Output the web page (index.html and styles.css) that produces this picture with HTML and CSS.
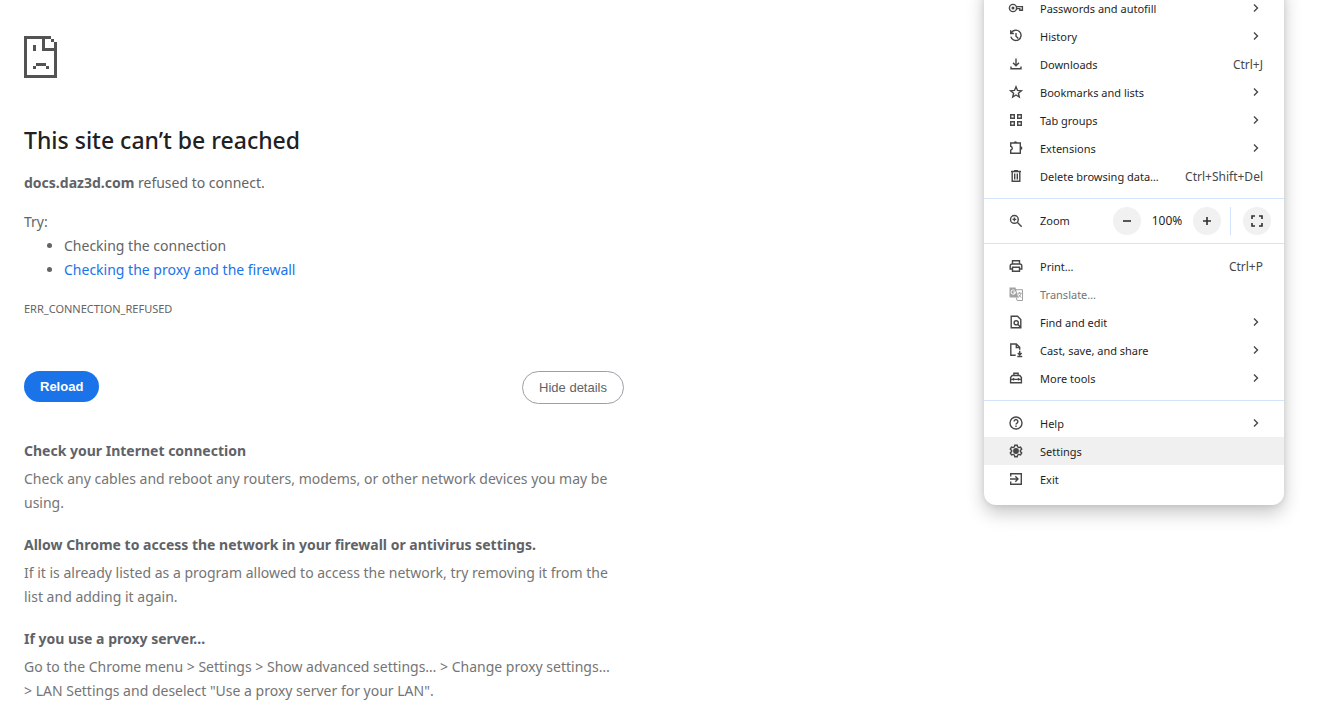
FILE: index.html
```
<!DOCTYPE html>
<html lang="en">
<head>
  <meta charset="UTF-8" />
  <meta name="viewport" content="width=device-width, initial-scale=1.0" />
  <title>docs.daz3d.com</title>
  <link rel="stylesheet" href="styles.css">
</head>
<body>
  <main class="error-page">
    <svg class="sad-page" viewBox="0 0 33 42" shape-rendering="crispEdges" aria-hidden="true">
      <path d="M0 0h27v3H3v36h27V15H18V3h3v9h9V6h3v36H0zM27 3h3v3h-3zM9 9h3v6H9zM12 27h10v3H12zM9 30h3v3H9zM22 30h3v3h-3z" />
    </svg>

    <h1 class="title">This site can’t be reached</h1>
    <p class="summary"><strong>docs.daz3d.com</strong> refused to connect.</p>

    <div class="suggestions">
      <p>Try:</p>
      <ul>
        <li>Checking the connection</li>
        <li><a href="#proxy">Checking the proxy and the firewall</a></li>
      </ul>
    </div>

    <div class="error-code">ERR_CONNECTION_REFUSED</div>

    <div class="buttons">
      <button class="btn btn-reload">Reload</button>
      <button class="btn btn-details">Hide details</button>
    </div>

    <section class="detail">
      <h2>Check your Internet connection</h2>
      <p>Check any cables and reboot any routers, modems, or other network devices you may be using.</p>
    </section>
    <section class="detail">
      <h2>Allow Chrome to access the network in your firewall or antivirus settings.</h2>
      <p>If it is already listed as a program allowed to access the network, try removing it from the list and adding it again.</p>
    </section>
    <section class="detail" id="proxy">
      <h2>If you use a proxy server…</h2>
      <p>Go to the Chrome menu &gt; Settings &gt; Show advanced settings… &gt; Change proxy settings… &gt;&nbsp;LAN Settings and deselect "Use a proxy server for your LAN".</p>
    </section>
  </main>

  <nav class="menu" aria-label="Browser menu">
    <div class="group">
      <button class="item">
        <svg class="icon" viewBox="0 0 16 16"><circle cx="5" cy="8" r="3.6" /><circle class="solid" cx="5" cy="8" r="1.5" /><path d="M8.4 6.6h6v3.6h-2.6V8.6H8.6" /></svg>
        <span class="label">Passwords and autofill</span>
        <svg class="chevron" viewBox="0 0 16 16"><path d="M7 4.5 10.5 8 7 11.5" /></svg>
      </button>
      <button class="item">
        <svg class="icon" viewBox="0 0 16 16"><path d="M3.2 5A5.2 5.2 0 1 1 2.8 8.6M2.7 2.3v3.2h3.2M8 5v3.2l2.3 2.3" /></svg>
        <span class="label">History</span>
        <svg class="chevron" viewBox="0 0 16 16"><path d="M7 4.5 10.5 8 7 11.5" /></svg>
      </button>
      <button class="item">
        <svg class="icon" viewBox="0 0 16 16"><path d="M8 2.5v7M5 6.8l3 3 3-3M3 10.5v2.2h10v-2.2" /></svg>
        <span class="label">Downloads</span>
        <span class="shortcut">Ctrl+J</span>
      </button>
      <button class="item">
        <svg class="icon" viewBox="0 0 16 16"><path d="m8 2.8 1.5 3.6 3.9.3-3 2.5.9 3.8L8 11l-3.3 2 .9-3.8-3-2.5 3.9-.3z" /></svg>
        <span class="label">Bookmarks and lists</span>
        <svg class="chevron" viewBox="0 0 16 16"><path d="M7 4.5 10.5 8 7 11.5" /></svg>
      </button>
      <button class="item">
        <svg class="icon" viewBox="0 0 16 16"><path d="M2.7 2.7h3.6v3.6H2.7zM9.7 2.7h3.6v3.6H9.7zM2.7 9.7h3.6v3.6H2.7zM9.7 9.7h3.6v3.6H9.7z" /></svg>
        <span class="label">Tab groups</span>
        <svg class="chevron" viewBox="0 0 16 16"><path d="M7 4.5 10.5 8 7 11.5" /></svg>
      </button>
      <button class="item">
        <svg class="icon" viewBox="0 0 16 16"><path d="M2.7 3h9.6v10.3H2.7v-3.2a2 2 0 0 0 0-3.9z" /><path class="solid" d="M5.6 3a1.8 1.8 0 0 1 3.6 0zM12.5 6.2a1.9 1.9 0 0 1 0 3.8z" /></svg>
        <span class="label">Extensions</span>
        <svg class="chevron" viewBox="0 0 16 16"><path d="M7 4.5 10.5 8 7 11.5" /></svg>
      </button>
      <button class="item">
        <svg class="icon" viewBox="0 0 16 16"><path d="M3 3.5h10M6 2.6h4M4.2 3.5v9.8h7.6V3.5M6.7 5.5v6M9.3 5.5v6" /></svg>
        <span class="label">Delete browsing data…</span>
        <span class="shortcut">Ctrl+Shift+Del</span>
      </button>
    </div>

    <div class="group zoom">
      <svg class="icon" viewBox="0 0 16 16"><circle cx="6.4" cy="6.4" r="3.9" /><path d="m9.3 9.3 4.4 4.4M4.5 6.4h3.8M6.4 4.5v3.8" /></svg>
      <span class="label">Zoom</span>
      <button class="round" aria-label="Zoom out"><svg viewBox="0 0 16 16"><path d="M4 8h8" /></svg></button>
      <span class="percent">100%</span>
      <button class="round" aria-label="Zoom in"><svg viewBox="0 0 16 16"><path d="M4 8h8M8 4v8" /></svg></button>
      <span class="divider"></span>
      <button class="round" aria-label="Full screen"><svg viewBox="0 0 16 16"><path d="M3 6V3h3M10 3h3v3M13 10v3h-3M6 13H3v-3" /></svg></button>
    </div>

    <div class="group">
      <button class="item">
        <svg class="icon" viewBox="0 0 16 16"><path d="M4.5 5.8V2.7h7v3.1M4.5 11H2.2V8a2 2 0 0 1 2-2h7.6a2 2 0 0 1 2 2v3h-2.3M4.5 9.3h7v4h-7z" /></svg>
        <span class="label">Print…</span>
        <span class="shortcut">Ctrl+P</span>
      </button>
      <button class="item" disabled>
        <svg class="icon" viewBox="0 0 16 16"><path class="solid" fill-rule="evenodd" d="M1.5 1.5h6l2.8 10H2.5a1 1 0 0 1-1-1zM7.8 5.6H5.2v1h1.4a1.6 1.6 0 1 1-.4-1.8l.7-.7a2.6 2.6 0 1 0 .9 1.5z" /><path class="thin" d="M8 3.7h6.5v10.8H9.2l-.9-3M9.6 7.2h4M11.6 6v1.2M13 7.4c-.4 1.7-1.4 3-2.9 4M10.6 8.6l2.6 3" /></svg>
        <span class="label">Translate…</span>
      </button>
      <button class="item">
        <svg class="icon" viewBox="0 0 16 16"><path d="M3.2 2.2h6.3l3.3 3.3v8.3H3.2zM10 10.5l2.7 3" /><circle cx="8.2" cy="8.8" r="2.1" /></svg>
        <span class="label">Find and edit</span>
        <svg class="chevron" viewBox="0 0 16 16"><path d="M7 4.5 10.5 8 7 11.5" /></svg>
      </button>
      <button class="item">
        <svg class="icon" viewBox="0 0 16 16"><path d="M7.7 13.2H2.8V2h5.5l3.4 3.4v2.4M8.3 2v3.6h3.4M11.7 8.8v4M9.8 11l1.9 1.9 1.9-1.9M9.3 14.5h4.9" /></svg>
        <span class="label">Cast, save, and share</span>
        <svg class="chevron" viewBox="0 0 16 16"><path d="M7 4.5 10.5 8 7 11.5" /></svg>
      </button>
      <button class="item">
        <svg class="icon" viewBox="0 0 16 16"><path d="M2.6 12.7V7.5l1.6-2h7.6l1.6 2v5.2zM5.9 5.4V3.3h4.2v2.1M2.6 9.4h10.8M5.5 8v2.5M10.5 8v2.5" /></svg>
        <span class="label">More tools</span>
        <svg class="chevron" viewBox="0 0 16 16"><path d="M7 4.5 10.5 8 7 11.5" /></svg>
      </button>
    </div>

    <div class="group">
      <button class="item">
        <svg class="icon" viewBox="0 0 16 16"><circle cx="8" cy="8" r="6" /><path d="M6.1 6.5a1.9 1.9 0 1 1 2.9 1.6c-.7.4-1 .7-1 1.5M8 10.6v1.3" /></svg>
        <span class="label">Help</span>
        <svg class="chevron" viewBox="0 0 16 16"><path d="M7 4.5 10.5 8 7 11.5" /></svg>
      </button>
      <button class="item active">
        <svg class="icon" viewBox="0 0 16 16"><path d="M6.8 2.2h2.4l.4 1.7 1.2.7 1.7-.5 1.2 2.1L12.4 7.4v1.2l1.3 1.2-1.2 2.1-1.7-.5-1.2.7-.4 1.7H6.8l-.4-1.7-1.2-.7-1.7.5-1.2-2.1 1.3-1.2V7.4L2.3 6.2l1.2-2.1 1.7.5 1.2-.7z" /><circle class="solid" cx="8" cy="8" r="2.9" /></svg>
        <span class="label">Settings</span>
      </button>
      <button class="item">
        <svg class="icon" viewBox="0 0 16 16"><path d="M2.7 5.5V2.7h10.6v10.6H2.7v-2.8M2 8h7.6M7.3 5.3 10 8l-2.7 2.7" /></svg>
        <span class="label">Exit</span>
      </button>
    </div>
  </nav>
</body>
</html>
```
FILE: styles.css
```
* {
  box-sizing: border-box;
}

body {
  margin: 0;
  background: #fff;
  color: #646464;
  font-family: 'Segoe UI', 'Noto Sans', sans-serif;
  font-size: 14px;
  line-height: 24px;
}

h1, h2, p, ul {
  margin: 0;
}

button {
  font-family: inherit;
  cursor: pointer;
}

.error-page {
  max-width: 648px;
  padding: 36px 24px 0;
}

.sad-page {
  display: block;
  width: 33px;
  height: 42px;
  fill: #535353;
}

.title {
  margin-top: 47px;
  color: #202124;
  font-size: 23px;
  font-weight: 500;
  line-height: 30px;
}

.summary {
  margin-top: 16px;
}

.summary strong {
  color: #5f6368;
}

.suggestions {
  margin-top: 15px;
}

.suggestions ul {
  padding-left: 40px;
}

.suggestions a {
  color: #1a73e8;
  text-decoration: none;
}

.error-code {
  margin-top: 15px;
  font-size: 11px;
}

.buttons {
  display: flex;
  justify-content: space-between;
  align-items: flex-start;
  margin-top: 50px;
  margin-bottom: 35px;
}

.btn {
  padding: 8px 16px;
  border: none;
  border-radius: 20px;
  font-family: Arial, 'Liberation Sans', sans-serif;
  font-size: 13px;
  line-height: 15px;
}

.btn-reload {
  background: #1a73e8;
  color: #fff;
  font-weight: 600;
}

.btn-details {
  border: 1px solid #9aa0a6;
  background: #fff;
  color: #5f6368;
}

.detail {
  margin-bottom: 18px;
  color: #757575;
}

.detail:last-child {
  margin-bottom: 0;
}

.detail h2 {
  margin-bottom: 4px;
  color: #5f6368;
  font-size: 14px;
  line-height: 24px;
}

/* menu hangs over the page from the toolbar */
.menu {
  position: absolute;
  top: -14px;
  right: 50px;
  width: 300px;
  padding-bottom: 4px;
  border-radius: 0 0 12px 12px;
  background: #fff;
  color: #1f1f1f;
  font-size: 11px;
  box-shadow: 0 8px 18px rgba(0, 0, 0, 0.22), 0 0 6px rgba(0, 0, 0, 0.1);
}

.group {
  padding: 8px 0;
}

.group + .group {
  border-top: 1px solid #d3e3fd;
}

.item {
  display: flex;
  align-items: center;
  gap: 16px;
  width: 100%;
  height: 28px;
  padding: 0 21px 0 24px;
  border: none;
  background: none;
  color: inherit;
  font-size: 11px;
  text-align: left;
}

.item:hover,
.item.active {
  background: #f0f0f0;
}

.item:disabled {
  background: none;
  color: #757575;
}

.item:disabled .icon {
  opacity: 0.5;
}

.label {
  flex: 1;
  white-space: nowrap;
}

.shortcut {
  color: #474747;
}

.icon,
.chevron,
.round svg {
  flex: none;
  width: 16px;
  height: 16px;
  fill: none;
  stroke: #474747;
  stroke-width: 1.4;
}

.icon .solid {
  fill: #474747;
  stroke: none;
}

.icon .thin {
  stroke-width: 1;
}

.zoom {
  display: flex;
  align-items: center;
  padding: 8px 13px 8px 24px;
}

.zoom .label {
  padding-left: 16px;
}

.percent {
  width: 52px;
  text-align: center;
}

.round {
  display: flex;
  justify-content: center;
  align-items: center;
  width: 28px;
  height: 28px;
  padding: 0;
  border: none;
  border-radius: 50%;
  background: #f1f1f1;
}

.round svg {
  stroke: #303030;
  stroke-width: 1.6;
}

.shortcut,
.percent {
  font-size: 12px;
}

.divider {
  width: 1px;
  height: 28px;
  margin: 0 12px 0 9px;
  background: #d3e3fd;
}
```
